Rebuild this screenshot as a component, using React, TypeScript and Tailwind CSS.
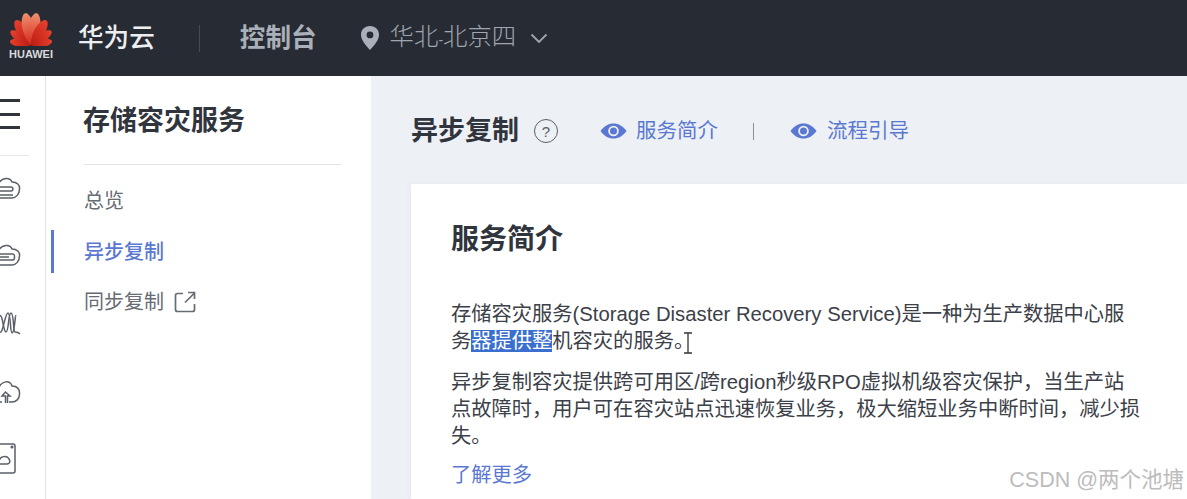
const cjk = "font-['Liberation_Sans','Noto_Sans_CJK_SC',sans-serif]";

const petals = [
  { a: -80, s: 0.66, f: "url(#petalOuter)" },
  { a: -56, s: 0.76, f: "url(#petalOuter)" },
  { a: -32, s: 0.9, f: "url(#petalOuter)" },
  { a: -10, s: 1, f: "url(#petalInner)" },
  { a: 10, s: 1, f: "url(#petalInner)" },
  { a: 32, s: 0.9, f: "url(#petalOuter)" },
  { a: 56, s: 0.76, f: "url(#petalOuter)" },
  { a: 80, s: 0.66, f: "url(#petalOuter)" },
];

function HuaweiLogo() {
  return (
    <svg width="44" height="34" viewBox="0 0 44 34" aria-hidden="true">
      <defs>
        <linearGradient id="petalInner" x1="0" y1="0" x2="0" y2="1">
          <stop offset="0" stopColor="#f0906e" />
          <stop offset="1" stopColor="#d4281c" />
        </linearGradient>
        <linearGradient id="petalOuter" x1="0" y1="0" x2="0" y2="1">
          <stop offset="0" stopColor="#e8402c" />
          <stop offset="1" stopColor="#b81c14" />
        </linearGradient>
      </defs>
      {petals.map((p) => (
        <path
          key={p.a}
          d="M22 33C15.500 24 14 8 20 1.500C21 0.500 23 0.500 24 1.500C30 8 28.500 24 22 33Z"
          fill={p.f}
          transform={`rotate(${p.a} 22 33) translate(22 33) scale(${p.s}) translate(-22 -33)`}
        />
      ))}
    </svg>
  );
}

function Eye() {
  return (
    <svg width="27" height="16" viewBox="0 0 27 16" aria-hidden="true">
      <path d="M0.500 8C4 3 8.500 0.500 13.500 0.500C18.500 0.500 23 3 26.500 8C23 13 18.500 15.500 13.500 15.500C8.500 15.500 4 13 0.500 8Z" fill="#5a78d2" />
      <circle cx="13.500" cy="8" r="5.300" fill="#edf0f4" />
      <circle cx="13.500" cy="8" r="3.500" fill="#5a78d2" />
    </svg>
  );
}

function Rail() {
  return (
    <div className="flex w-[46px] shrink-0 flex-col overflow-hidden border-r border-[#dfe2e7] bg-white">
      <div className="mt-[23px] flex h-[30px] flex-col justify-between pr-[25px]">
        <div className="h-[3px] bg-[#30343c]" />
        <div className="h-[3px] bg-[#30343c]" />
        <div className="h-[3px] bg-[#30343c]" />
      </div>
      <div className="mt-[26px] mr-[16px] h-px bg-[#e4e7eb]" />
      <div className="mt-[20px] flex flex-col gap-[43px]">
        <svg width="21" height="24" viewBox="0 0 21 24" fill="none" stroke="#5a5f68" strokeWidth="1.500" aria-hidden="true">
          <path d="M-2 8C2 1 10 1 12 6C17 6 20 9 19.500 13C19.500 18 16 22 12 22H-2" />
          <path d="M-2 11H11C13.500 11 13.500 15 11 15H-2M-2 19H13" />
        </svg>
        <svg width="21" height="24" viewBox="0 0 21 24" fill="none" stroke="#5a5f68" strokeWidth="1.500" aria-hidden="true">
          <path d="M-2 8C2 1 10 1 12 6C17 6 20 9 19.500 13C19.500 18 16 22 12 22H-2" />
          <path d="M-2 11H13C15 11 15 17 13 17H-2M-2 14H9" />
        </svg>
        <svg width="21" height="26" viewBox="0 0 21 26" fill="none" stroke="#5a5f68" strokeWidth="1.500" aria-hidden="true">
          <path d="M-1 6C3 2 3 22 6 22C9 22 8 3 11 3C14 3 13 22 15 22C17 22 18 22 20 24" />
          <path d="M0 22C3 24 5 3 8 3C11 3 10 23 12 23C15 23 15 3 16 6" />
        </svg>
        <svg width="21" height="26" viewBox="0 0 21 26" fill="none" stroke="#5a5f68" strokeWidth="1.500" aria-hidden="true">
          <path d="M-2 10C2 1 10 1 12 7C17 7 20 10 19.500 15C19.500 20 16 23 12 23H9M2 23H-2" />
          <path d="M5.500 24V17H2L5.500 13L10 17H7.500V24" />
        </svg>
        <svg className="-mt-[5px]" width="16" height="31" viewBox="0 0 16 31" fill="none" stroke="#5a5f68" strokeWidth="1.500" aria-hidden="true">
          <path d="M-2 1H13C14.500 1 15 2 15 3V28C15 29 14.500 30 13 30H-2" />
          <path d="M-1 18C0 13 7 12 9 16C11 19 9 21 7 21H-1" />
          <circle cx="12" cy="4" r="0.800" fill="#5a5f68" />
        </svg>
      </div>
    </div>
  );
}

function Sidebar() {
  return (
    <aside className="flex w-[325px] shrink-0 flex-col bg-white pl-[38px] pr-[30px]">
      <h2 className="mt-[27px] -ml-px text-[27px] leading-[36px] font-bold text-[#30343c]">存储容灾服务</h2>
      <div className="mt-[25px] h-px bg-[#dfe3ea]" />
      <nav className="relative mt-[22px] flex flex-col text-[20px] leading-[28px] text-[#666b74]">
        <span>总览</span>
        <span className="relative mt-[23px] font-medium text-[#5a78d2]">
          异步复制
          <span className="absolute top-[-8px] left-[-33px] h-[43px] w-[3px] bg-[#5a78d2]" />
        </span>
        <span className="mt-[22px] flex items-center gap-[10px]">
          同步复制
          <svg width="22" height="22" viewBox="0 0 22 22" fill="none" stroke="#666b74" strokeWidth="1.700" aria-hidden="true">
            <path d="M9 2.500H3.500C2 2.500 1.500 3.500 1.500 4.500V18.500C1.500 19.500 2 20.500 3.500 20.500H18.500C19.500 20.500 20.500 19.500 20.500 18.500V13" />
            <path d="M11 11.500L20 2.500M14 1.500H20.500V8" />
          </svg>
        </span>
      </nav>
    </aside>
  );
}

function Main() {
  return (
    <main className="relative flex min-w-0 flex-1 flex-col bg-[#edf0f4] pl-[40px]">
      <div className="mt-[37px] flex h-[36px] items-center">
        <h1 className="text-[27px] leading-[36px] font-bold text-[#30343c]">异步复制</h1>
        <span className="ml-[15px] flex h-[24px] w-[24px] items-center justify-center rounded-full border-[1.500px] border-[#5b6068] text-[15px] leading-none text-[#5b6068]">?</span>
        <span className="ml-[42px] flex items-center gap-[9px] text-[20.500px] text-[#5a78d2]">
          <Eye />
          服务简介
        </span>
        <span className="ml-[35px] h-[17px] w-px bg-[#8a8f98]" />
        <span className="ml-[36px] flex items-center gap-[10px] text-[20.500px] text-[#5a78d2]">
          <Eye />
          流程引导
        </span>
      </div>
      <section className="mt-[35px] flex-1 bg-white pl-[40px] shadow-[-2px_0_6px_rgba(0,0,0,0.03)]">
        <h3 className="mt-[38px] text-[28px] leading-[36px] font-bold text-[#30343c]">服务简介</h3>
        <div className="mt-[43px] w-[710px] text-[20.270px] leading-[27px] text-[#3c4048]">
          <p className="relative">
            存储容灾服务(Storage Disaster Recovery Service)是一种为生产数据中心服
            <br />
            务<span className="bg-[#3a6fd0] text-white">器提供整</span>机容灾的服务。
            <svg className="absolute top-[31px] left-[232px]" width="10" height="22" viewBox="0 0 10 22" fill="none" stroke="#30343c" strokeWidth="1.300" aria-hidden="true">
              <path d="M1 1H9M5 1V21M1 21H9" />
            </svg>
          </p>
          <p className="mt-[14px]">
            异步复制容灾提供跨可用区/跨region秒级RPO虚拟机级容灾保护，当生产站
            <br />
            点故障时，用户可在容灾站点迅速恢复业务，极大缩短业务中断时间，减少损
            <br />
            失。
          </p>
          <p className="mt-[12px] text-[#5a78d2]">了解更多</p>
        </div>
      </section>
      <span className="absolute right-[3px] bottom-[6px] text-[21.500px] leading-[26px] text-[#bcbcbc]">CSDN @两个池塘</span>
    </main>
  );
}

export default function App() {
  return (
    <div className={`flex h-[499px] w-[1187px] flex-col overflow-hidden ${cjk}`}>
      <header className="flex h-[76px] shrink-0 items-center bg-[#272b33] pr-4">
        <div className="mb-[4px] ml-[9px] flex w-[44px] flex-col items-center">
          <HuaweiLogo />
          <span className="mt-[3px] text-[11px] leading-[11px] font-bold whitespace-nowrap text-[#d8dade]">HUAWEI</span>
        </div>
        <span className="ml-[25px] text-[25.600px] leading-[34px] font-medium text-[#eceef0]">华为云</span>
        <span className="ml-[44px] h-[27px] w-px bg-[#474b53]" />
        <span className="ml-[40px] text-[25.600px] leading-[34px] font-bold text-[#aab0b9]">控制台</span>
        <svg className="ml-[43px]" width="20" height="26" viewBox="0 0 20 26" aria-hidden="true">
          <path fillRule="evenodd" d="M10 1C4.800 1 1 4.800 1 9.800C1 15.500 6.500 21 10 25C13.500 21 19 15.500 19 9.800C19 4.800 15.200 1 10 1ZM10 6.500A3.400 3.400 0 1 1 10 13.300A3.400 3.400 0 0 1 10 6.500Z" fill="#aab0b9" />
        </svg>
        <span className="ml-[10px] text-[24.400px] leading-[34px] font-light text-[#a0a6af]">
          华北<span className="text-[14px]">-</span>北京四
        </span>
        <svg className="ml-[14px]" width="18" height="11" viewBox="0 0 18 11" fill="none" stroke="#a0a6af" strokeWidth="1.800" aria-hidden="true">
          <path d="M1.500 1.500L9 9L16.500 1.500" />
        </svg>
      </header>
      <div className="flex min-h-0 flex-1">
        <Rail />
        <Sidebar />
        <Main />
      </div>
    </div>
  );
}
